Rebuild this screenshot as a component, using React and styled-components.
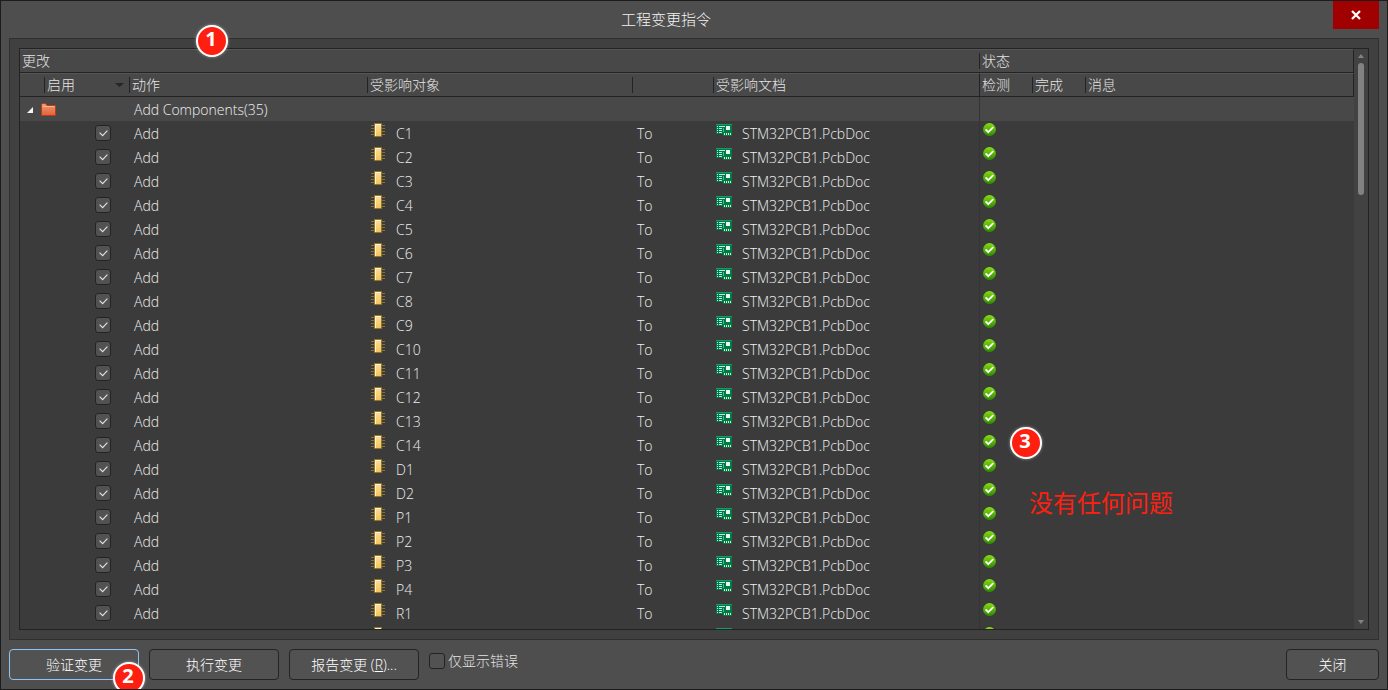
import React, { useState } from 'react';
import styled, { createGlobalStyle } from 'styled-components';

const GlobalStyle = createGlobalStyle`
  * {
    box-sizing: border-box;
  }

  body {
    margin: 0;
    background: #4e4e4e;
    color: #e4e4e4;
    font-family: 'Open Sans', 'Noto Sans CJK SC', sans-serif;
    font-size: 14px;
    line-height: 20px;
  }

  button,
  input {
    font: inherit;
    color: inherit;
  }
`;

const Dialog = styled.div`
  position: relative;
  display: flex;
  flex-direction: column;
  height: 100vh;
  padding: 0 8px;
  border: 1px solid #1c1c1c;
  background: #4e4e4e;
  overflow: hidden;
`;

const TitleBar = styled.header`
  display: grid;
  grid-template-columns: 1fr auto 1fr;
  align-items: start;
  height: 37px;
`;

const Title = styled.h1`
  grid-column: 2;
  margin: 0 56px 0 0;
  padding-top: 8px;
  color: #f4f4f4;
  font-size: 15px;
  font-weight: 300;
  line-height: 20px;
`;

const CloseIconButton = styled.button`
  display: flex;
  align-items: center;
  justify-content: center;
  justify-self: end;
  width: 46px;
  height: 28px;
  padding: 0 1px 1px 0;
  border: none;
  background: #a00000;
`;

const Panel = styled.main`
  display: flex;
  flex: 1;
  min-height: 0;
  padding: 9px;
  border: 1px solid #303030;
  background: #404040;
`;

const Grid = styled.div`
  display: flex;
  flex: 1;
  min-width: 0;
  border: 1px solid #232323;
  background: #3b3b3b;
`;

const GridBody = styled.div`
  flex: 1;
  min-width: 0;
  overflow: hidden;
`;

const Table = styled.table`
  width: 100%;
  table-layout: fixed;
  border-collapse: separate;
  border-spacing: 0;
`;

const Col = styled.col`
  width: ${(props) => (props.$width ? `${props.$width}px` : 'auto')};
`;

const HeadCell = styled.th`
  height: 24px;
  padding: 0;
  border-top: 1px solid #555;
  border-bottom: 1px solid #232323;
  border-right: ${(props) => (props.$last ? '1px solid #232323' : 'none')};
  border-left: ${(props) => (props.$fullLine ? '1px solid #232323' : 'none')};
  background: #484848;
  font-weight: 300;
  text-align: left;
  vertical-align: top;
`;

const HeadLabel = styled.div`
  display: flex;
  align-items: center;
  justify-content: space-between;
  height: 16px;
  margin-top: 3px;
  padding: 0 5px 0 2px;
  border-left: ${(props) => (props.$line ? '1px solid #232323' : 'none')};
  line-height: 16px;
  white-space: nowrap;
`;

const Cell = styled.td`
  height: 24px;
  padding: 0 0 0 ${(props) => props.$left || 0}px;
  border-left: ${(props) => (props.$line ? '1px solid #343434' : 'none')};
  background: ${(props) => (props.$group ? '#484848' : '#3b3b3b')};
  color: #f0f0f0;
  font-weight: 300;
  vertical-align: top;
  white-space: nowrap;
`;

const CellText = styled.div`
  height: 24px;
  line-height: 26px;
`;

const CellLine = styled.div`
  display: flex;
  align-items: flex-start;
  gap: ${(props) => props.$gap || 0}px;
  height: 24px;
  padding-top: ${(props) => props.$top || 0}px;
`;

const IconText = styled.span`
  margin-top: ${(props) => -props.$top}px;
  line-height: 26px;
`;

const CheckLabel = styled.label`
  display: inline-flex;
  align-items: center;
  gap: 3px;
  line-height: 16px;
`;

const CheckBox = styled.span`
  display: grid;
  width: 16px;
  height: 16px;

  > * {
    grid-area: 1 / 1;
  }

  svg {
    place-self: center;
    pointer-events: none;
    visibility: hidden;
  }

  input:checked + svg {
    visibility: visible;
  }
`;

const CheckInput = styled.input`
  appearance: none;
  width: 100%;
  height: 100%;
  margin: 0;
  border: 1px solid #232323;
  border-radius: 3px;
  background: #525252;
`;

const ScrollBar = styled.div`
  display: flex;
  flex-direction: column;
  align-items: center;
  justify-content: space-between;
  width: 14px;
  padding: 5px 0;
  background: #424242;
`;

const ScrollTrack = styled.div`
  flex: 1;
  width: 6px;
  margin: 5px 0;
`;

const ScrollThumb = styled.div`
  height: 24%;
  border-radius: 3px;
  background: #828282;
`;

const Footer = styled.footer`
  display: flex;
  align-items: flex-start;
  gap: 10px;
  height: 49px;
  padding-top: 9px;
`;

const Button = styled.button`
  position: relative;
  width: ${(props) => props.$width || 130}px;
  height: 31px;
  padding: 0;
  border: 1px solid ${(props) => (props.$focused ? '#8fc3f0' : '#232323')};
  border-radius: 4px;
  background: #525252;
  color: #fff;
  font-weight: 300;
  line-height: 29px;
`;

const FilterOption = styled.div`
  flex: 1;
  padding-top: 4px;
  font-weight: 300;
`;

const Badge = styled.span`
  position: absolute;
  left: ${(props) => props.$x}px;
  top: ${(props) => props.$y}px;
  z-index: 2;
  width: 32px;
  height: 32px;
  padding-right: 2px;
  border: 2px solid #fff;
  border-radius: 50%;
  background: #ff1f10;
  box-shadow: 0 0 3px rgba(255, 255, 255, 0.5);
  color: #fff;
  font-size: 20px;
  font-weight: 700;
  line-height: 24px;
  text-align: center;
`;

const Note = styled.p`
  position: absolute;
  left: 1028px;
  top: 485px;
  margin: 0;
  color: #ff1f10;
  font-size: 24px;
  line-height: 34px;
`;

const CloseIcon = () => (
  <svg width="10" height="10" viewBox="0 0 10 10" fill="none" stroke="#fff" strokeWidth="2.2">
    <path d="M1 1l8 8M9 1L1 9" />
  </svg>
);

const TickIcon = () => (
  <svg width="9" height="7" viewBox="0 0 9 7" fill="none" stroke="#dedede" strokeWidth="1.2">
    <path d="M.6 2.6l3 3L8.4.6" />
  </svg>
);

const ExpandIcon = () => (
  <svg width="6" height="6" viewBox="0 0 6 6">
    <path d="M6 0v6H0z" fill="#f4f4f4" />
  </svg>
);

const ArrowIcon = ({ up, color, width = 9 }) => (
  <svg width={width} height="4" viewBox="0 0 8 4" preserveAspectRatio="none">
    <path d={up ? 'M0 4h8L4 0z' : 'M0 0h8L4 4z'} fill={color} />
  </svg>
);

const FolderIcon = () => (
  <svg width="15" height="13" viewBox="0 0 15 13">
    <defs>
      <linearGradient id="folder" x1="0" y1="0" x2="0" y2="1">
        <stop offset="0" stopColor="#f09a70" />
        <stop offset="1" stopColor="#e0623c" />
      </linearGradient>
    </defs>
    <path d="M.5 12.5v-11l1-1h3l1.5 2h8.5v10z" fill="url(#folder)" stroke="#b83c16" />
    <path d="M1.5 3.5h12" stroke="#f8b48c" />
  </svg>
);

const ChipIcon = () => (
  <svg width="14" height="14" viewBox="0 0 14 14">
    <defs>
      <linearGradient id="chip" x1="0" y1="0" x2="0" y2="1">
        <stop offset="0" stopColor="#f8dfa8" />
        <stop offset="1" stopColor="#f2c55c" />
      </linearGradient>
    </defs>
    <path d="M0 2.5h14M0 5.5h14M0 8.5h14M0 11.5h14" stroke="#8c7028" />
    <path d="M3.5.5h7v13h-7z" fill="url(#chip)" stroke="#937428" />
    <path d="M4.5 13V1.5H10" fill="none" stroke="#fff3d0" />
  </svg>
);

const BoardIcon = () => (
  <svg width="16" height="12" viewBox="0 0 16 12" shapeRendering="crispEdges">
    <path d="M0 0h16v12H7v-2H0z" fill="#007a4c" />
    <path d="M0 0h16v1H0z" fill="#159a68" />
    <path d="M1 2h1v1H1zM1 4h1v1H1zM1 6h1v1H1zM1 8h1v1H1zM3 2h6v1H3zM3 4h3v1H3zM3 6h3v1H3zM3 8h3v1H3z" fill="#b8ecd4" />
    <path d="M7 4h1v4H7z" fill="#4ab88c" />
    <path d="M10 2h4v4h-4z" fill="#e4f8f0" />
    <path d="M8 9h1v2H8zM10 9h1v2h-1zM12 9h1v2h-1zM14 9h1v2h-1z" fill="#f4e8b0" />
  </svg>
);

const PassedIcon = () => (
  <svg width="13" height="13" viewBox="0 0 13 13">
    <defs>
      <linearGradient id="passed" x1="0" y1="0" x2="0" y2="1">
        <stop offset="0" stopColor="#86dc10" />
        <stop offset="1" stopColor="#2c8c00" />
      </linearGradient>
    </defs>
    <circle cx="6.5" cy="6.5" r="6.4" fill="url(#passed)" />
    <path d="M2.6 6.3l2.7 2.9 5-5" fill="none" stroke="#fff" strokeWidth="1.9" />
  </svg>
);

const columnWidths = [24, 85, 238, 265, 81, 266, 53, 53, null];

const components = [
  'C1', 'C2', 'C3', 'C4', 'C5', 'C6', 'C7', 'C8', 'C9', 'C10', 'C11',
  'C12', 'C13', 'C14', 'D1', 'D2', 'P1', 'P2', 'P3', 'P4', 'R1',
];

const Check = ({ label, ...props }) => (
  <CheckBox>
    <CheckInput type="checkbox" aria-label={label} {...props} />
    <TickIcon />
  </CheckBox>
);

const ChangeRow = ({ name, checked, onToggle }) => (
  <tr>
    <Cell />
    <Cell $left={51}>
      {name && (
        <CellLine $top={4}>
          <Check label={name} checked={checked} onChange={onToggle} />
        </CellLine>
      )}
    </Cell>
    <Cell $left={5}>{name && <CellText>Add</CellText>}</Cell>
    <Cell $left={4}>
      <CellLine $gap={11} $top={2}>
        <ChipIcon />
        {name && <IconText $top={2}>{name}</IconText>}
      </CellLine>
    </Cell>
    <Cell $left={5}>{name && <CellText>To</CellText>}</Cell>
    <Cell $left={3}>
      <CellLine $gap={10} $top={3}>
        <BoardIcon />
        {name && <IconText $top={3}>STM32PCB1.PcbDoc</IconText>}
      </CellLine>
    </Cell>
    <Cell $left={3} $line>
      <CellLine $top={2}>
        <PassedIcon />
      </CellLine>
    </Cell>
    <Cell />
    <Cell />
  </tr>
);

const App = () => {
  const [disabled, setDisabled] = useState([]);
  const [onlyErrors, setOnlyErrors] = useState(false);

  const toggle = (name) => {
    setDisabled((list) =>
      list.includes(name) ? list.filter((item) => item !== name) : [...list, name]
    );
  };

  return (
    <>
      <GlobalStyle />
      <Dialog>
        <TitleBar>
          <Title>工程变更指令</Title>
          <CloseIconButton aria-label="关闭">
            <CloseIcon />
          </CloseIconButton>
        </TitleBar>

        <Panel>
          <Grid>
            <GridBody>
              <Table>
                <colgroup>
                  {columnWidths.map((width, index) => (
                    <Col key={index} $width={width} />
                  ))}
                </colgroup>
                <thead>
                  <tr>
                    <HeadCell colSpan={6}>
                      <HeadLabel>更改</HeadLabel>
                    </HeadCell>
                    <HeadCell colSpan={3} $last>
                      <HeadLabel $line>状态</HeadLabel>
                    </HeadCell>
                  </tr>
                  <tr>
                    <HeadCell />
                    <HeadCell>
                      <HeadLabel $line>
                        启用
                        <ArrowIcon color="#262626" />
                      </HeadLabel>
                    </HeadCell>
                    <HeadCell>
                      <HeadLabel $line>动作</HeadLabel>
                    </HeadCell>
                    <HeadCell>
                      <HeadLabel $line>受影响对象</HeadLabel>
                    </HeadCell>
                    <HeadCell>
                      <HeadLabel $line />
                    </HeadCell>
                    <HeadCell>
                      <HeadLabel $line>受影响文档</HeadLabel>
                    </HeadCell>
                    <HeadCell $fullLine>
                      <HeadLabel>检测</HeadLabel>
                    </HeadCell>
                    <HeadCell>
                      <HeadLabel $line>完成</HeadLabel>
                    </HeadCell>
                    <HeadCell $last>
                      <HeadLabel $line>消息</HeadLabel>
                    </HeadCell>
                  </tr>
                </thead>
                <tbody>
                  <tr>
                    <Cell $group colSpan={2} $left={7}>
                      <CellLine $gap={8} $top={6}>
                        <CellLine $top={4}>
                          <ExpandIcon />
                        </CellLine>
                        <FolderIcon />
                      </CellLine>
                    </Cell>
                    <Cell $group $left={5} colSpan={4}>
                      <CellText>Add Components(35)</CellText>
                    </Cell>
                    <Cell $group $line colSpan={3} />
                  </tr>
                  {components.map((name) => (
                    <ChangeRow
                      key={name}
                      name={name}
                      checked={!disabled.includes(name)}
                      onToggle={() => toggle(name)}
                    />
                  ))}
                  <ChangeRow />
                </tbody>
              </Table>
            </GridBody>
            <ScrollBar>
              <ArrowIcon up color="#828282" width={6} />
              <ScrollTrack>
                <ScrollThumb />
              </ScrollTrack>
              <ArrowIcon color="#828282" width={6} />
            </ScrollBar>
          </Grid>
        </Panel>

        <Footer>
          <Button $focused>
            验证变更
            <Badge $x={103} $y={12}>2</Badge>
          </Button>
          <Button>执行变更</Button>
          <Button>
            报告变更 (<u>R</u>)...
          </Button>
          <FilterOption>
            <CheckLabel>
              <Check
                checked={onlyErrors}
                onChange={(e) => setOnlyErrors(e.target.checked)}
              />
              仅显示错误
            </CheckLabel>
          </FilterOption>
          <Button $width={93}>关闭</Button>
        </Footer>

        <Badge $x={195} $y={24}>1</Badge>
        <Badge $x={1009} $y={426}>3</Badge>
        <Note>没有任何问题</Note>
      </Dialog>
    </>
  );
};

export default App;
